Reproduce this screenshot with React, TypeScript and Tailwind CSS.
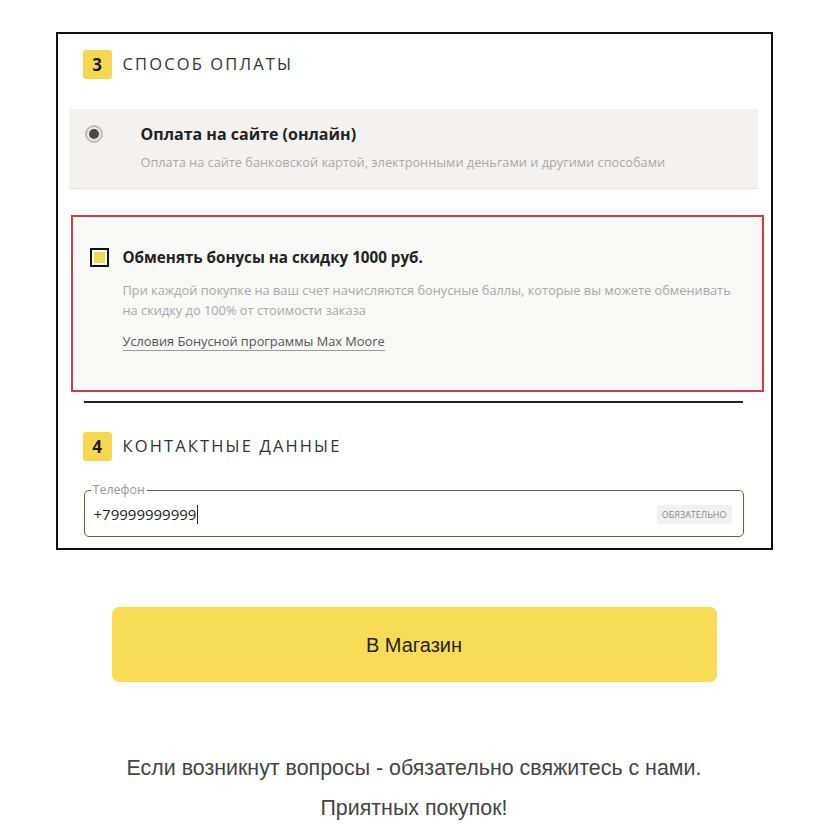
import React from "react";

const open = { fontFamily: '"Open Sans", "Noto Sans", sans-serif' };
const arial = { fontFamily: '"Liberation Sans", Arial, sans-serif' };

const StepHeader = ({ n, title }: { n: string; title: string }) => (
  <div className="flex items-center gap-[11px]">
    <div className="flex h-[29px] w-[29px] items-center justify-center rounded-[3px] bg-[#f6d84e] text-[17px] font-bold text-[#1a1a1a]">
      {n}
    </div>
    <span className="text-[16.5px] font-medium tracking-[0.13em] text-[#333]">{title}</span>
  </div>
);

export default function App() {
  return (
    <div className="flex min-h-[838px] w-full flex-col items-center bg-white pt-[32px]" style={arial}>
      <div className="h-[518px] w-[717px] overflow-hidden border-2 border-[#111] bg-white" style={open}>
        <div className="pl-[25px] pt-[16px]">
          <StepHeader n="3" title="СПОСОБ ОПЛАТЫ" />
        </div>

        {/* оплата онлайн */}
        <div className="ml-[11px] mr-[13px] mt-[30px] flex h-[80px] border-b border-[#e4e3e0] bg-[#f3f2f0] pl-[16px] pt-[16px]">
          <div className="flex h-[18px] w-[18px] items-center justify-center rounded-full border-2 border-[#bdbdbd] bg-[#e9e9e9]">
            <div className="h-[10px] w-[10px] rounded-full bg-[#4a4a4a]" />
          </div>
          <div className="ml-[38px]">
            <div className="text-[16px] font-bold leading-[18px] text-[#222]">Оплата на сайте (онлайн)</div>
            <div className="mt-[11px] text-[12.75px] leading-[17px] text-[#aaaaaa]">
              Оплата на сайте банковской картой, электронными деньгами и другими способами
            </div>
          </div>
        </div>

        {/* бонусы */}
        <div className="ml-[13px] mr-[7px] mt-[26px] flex h-[177px] border-2 border-[#d33a3a] bg-[#f8f8f7] pl-[17px] pt-[31px]">
          <div className="flex h-[19px] w-[19px] shrink-0 items-center justify-center border-2 border-[#111] bg-white">
            <div className="h-[11px] w-[11px] bg-[#f3d94a]" />
          </div>
          <div className="ml-[14px] pr-[20px]">
            <div className="text-[15.2px] font-bold leading-[19px] text-[#222]">
              Обменять бонусы на скидку 1000 руб.
            </div>
            <div className="mt-[13px] text-[12.8px] leading-[20px] text-[#a9a9a9]">
              При каждой покупке на ваш счет начисляются бонусные баллы, которые вы можете обменивать
              <br />
              на скидку до 100% от стоимости заказа
            </div>
            <div className="mt-[12px] inline-block border-b border-[#9a9a9a] text-[12.8px] leading-[18px] text-[#555]">
              Условия Бонусной программы Max Moore
            </div>
          </div>
        </div>

        <div className="ml-[26px] mr-[28px] mt-[9px] h-[2px] bg-[#222]" />

        <div className="pl-[25px] pt-[29px]">
          <StepHeader n="4" title="КОНТАКТНЫЕ ДАННЫЕ" />
        </div>

        {/* телефон */}
        <fieldset className="ml-[26px] mr-[27px] mt-[22px] h-[54px] rounded-[5px] border border-[#5f5f5f] px-[9px] shadow-[0_0_4px_rgba(240,220,120,0.35)]">
          <legend className="-ml-[3px] px-[2px] text-[12.5px] leading-[14px] text-[#9a9a9a]">Телефон</legend>
          <div className="flex items-center justify-between pt-[7px]">
            <div className="flex items-center text-[15px] leading-[20px] text-[#222]">
              +79999999999
              <span className="ml-[1px] h-[19px] w-px bg-[#222]" />
            </div>
            <div className="mr-[2px] rounded-[3px] bg-[#f1f1f1] px-[5px] py-[4px] text-[9px] leading-[11px] text-[#8c8c8c]">
              ОБЯЗАТЕЛЬНО
            </div>
          </div>
        </fieldset>
      </div>

      <button
        type="button"
        className="mt-[57px] flex h-[75px] w-[605px] items-center justify-center rounded-[7px] bg-[#f9dc56] text-[20px] text-[#1e1e1e]"
      >
        В Магазин
      </button>

      <p className="mt-[73px] text-[21.4px] leading-[26px] text-[#444]">
        Если возникнут вопросы - обязательно свяжитесь с нами.
      </p>
      <p className="mt-[14px] text-[21.4px] leading-[26px] text-[#444]">Приятных покупок!</p>
    </div>
  );
}
